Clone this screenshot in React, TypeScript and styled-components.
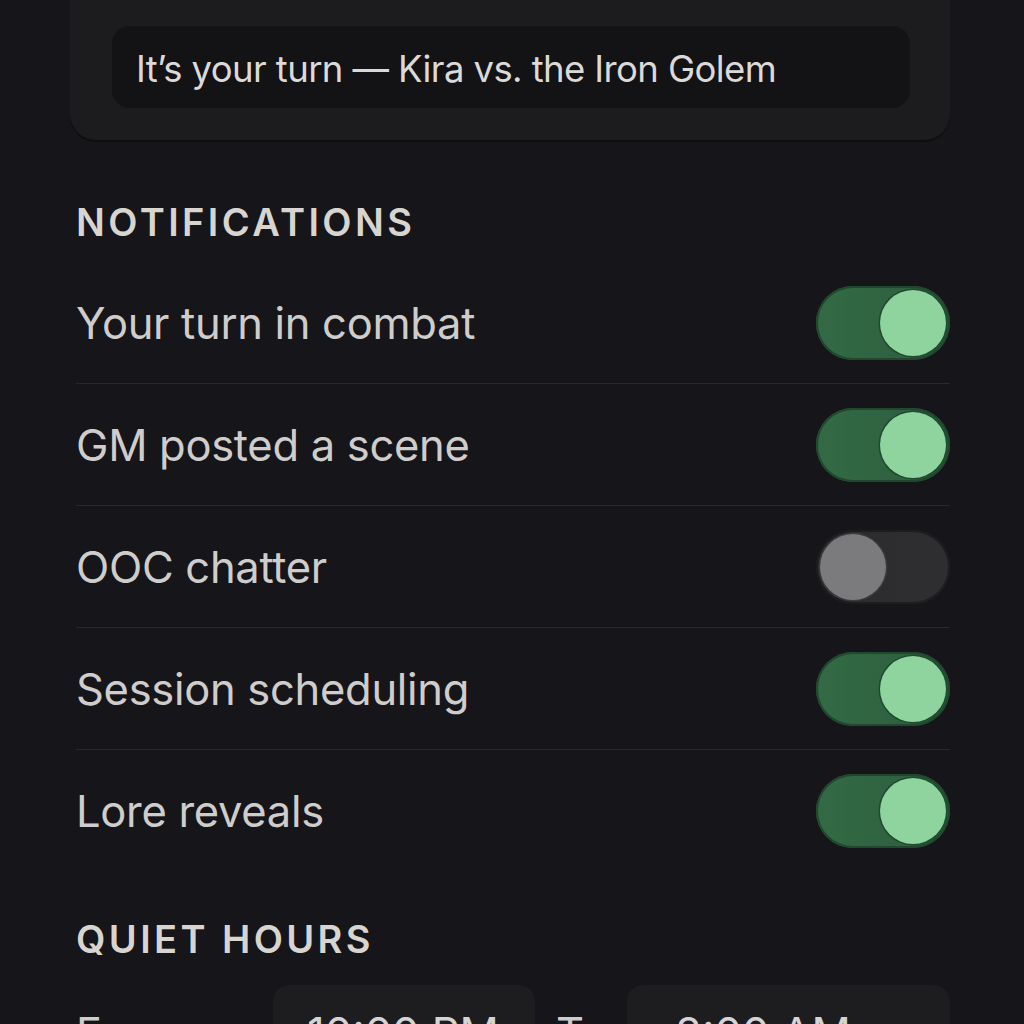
import React, { useState } from "react";
import styled, { createGlobalStyle } from "styled-components";

const GlobalStyle = createGlobalStyle`
  html, body {
    margin: 0;
    padding: 0;
    background: #161519;
    overflow: hidden;
  }
  body {
    font-family: Inter, "Noto Sans", sans-serif;
    color: #d2d0ce;
  }
`;

type Pref = { key: string; label: string; on: boolean };

const initialPrefs: Pref[] = [
  { key: "turn", label: "Your turn in combat", on: true },
  { key: "scene", label: "GM posted a scene", on: true },
  { key: "ooc", label: "OOC chatter", on: false },
  { key: "schedule", label: "Session scheduling", on: true },
  { key: "lore", label: "Lore reveals", on: true },
];

const App = () => {
  const [prefs, setPrefs] = useState(initialPrefs);

  const toggle = (key: string) =>
    setPrefs((list) =>
      list.map((p) => (p.key === key ? { ...p, on: !p.on } : p))
    );

  return (
    <>
      <GlobalStyle />
      <Page>
        <PreviewCard>
          <PreviewInner>It’s your turn — Kira vs. the Iron Golem</PreviewInner>
        </PreviewCard>

        <SectionTitle>Notifications</SectionTitle>
        <List>
          {prefs.map((p) => (
            <Row key={p.key}>
              <RowLabel>{p.label}</RowLabel>
              <Switch
                $on={p.on}
                role="switch"
                aria-checked={p.on}
                onClick={() => toggle(p.key)}
              >
                <Knob $on={p.on} />
              </Switch>
            </Row>
          ))}
        </List>

        <SectionTitle $quiet>Quiet hours</SectionTitle>
        <TimeRow>
          <TimeLabel>From</TimeLabel>
          <TimeBox $indent={34}>10:00 PM</TimeBox>
          <TimeLabel>To</TimeLabel>
          <TimeBox $indent={48}>8:00 AM</TimeBox>
        </TimeRow>
      </Page>
    </>
  );
};

export default App;

const Page = styled.div`
  padding: 0 74px 0 76px;
  display: flex;
  flex-direction: column;
`;

const PreviewCard = styled.div`
  margin: -24px 0 0 -6px;
  padding: 50px 40px 32px 42px;
  background: #1c1b1e;
  border-radius: 26px;
  box-shadow: 0 2px 0 rgba(0, 0, 0, 0.35);
`;

const PreviewInner = styled.div`
  height: 82px;
  display: flex;
  align-items: center;
  padding: 4px 24px 0;
  box-sizing: border-box;
  background: #131215;
  border-radius: 18px;
  font-size: 36.5px;
  color: #dcdad8;
  letter-spacing: -0.6px;
`;

const SectionTitle = styled.h2<{ $quiet?: boolean }>`
  margin: ${(p) => (p.$quiet ? "46px 0 0" : "60px 0 0")};
  height: 44px;
  line-height: 44px;
  font-size: 38px;
  font-weight: 600;
  letter-spacing: 3.4px;
  text-transform: uppercase;
  color: #d8d5d1;
`;

const List = styled.div`
  margin-top: 18px;
  display: flex;
  flex-direction: column;
`;

const Row = styled.div`
  height: 121px;
  display: flex;
  align-items: center;
  justify-content: space-between;
  border-bottom: 1px solid #29282c;

  &:last-child {
    border-bottom: none;
  }
`;

const RowLabel = styled.span`
  font-size: 43.5px;
  color: #cfcdcb;
  letter-spacing: -0.3px;
`;

const Switch = styled.button<{ $on: boolean }>`
  width: 134px;
  height: 74px;
  border: none;
  padding: 0 4px;
  border-radius: 37px;
  display: flex;
  align-items: center;
  justify-content: ${(p) => (p.$on ? "flex-end" : "flex-start")};
  background: ${(p) =>
    p.$on
      ? "linear-gradient(90deg, #336a45, #2d5c3d)"
      : "linear-gradient(90deg, #2a292c, #2f2e31)"};
  box-shadow: inset 0 0 0 2px
    ${(p) => (p.$on ? "rgba(30, 70, 45, 0.9)" : "rgba(20, 20, 22, 0.6)")};
  cursor: pointer;
`;

const Knob = styled.span<{ $on: boolean }>`
  width: 66px;
  height: 66px;
  border-radius: 50%;
  background: ${(p) => (p.$on ? "#8fd49f" : "#7b7a7c")};
  box-shadow: 0 0 0 1.5px ${(p) => (p.$on ? "#1f4a2d" : "#3a393c")};
`;

const TimeRow = styled.div`
  margin-top: 24px;
  display: grid;
  grid-template-columns: 197px 262px 92px 1fr;
  align-items: start;
`;

const TimeLabel = styled.span`
  padding-top: 22px;
  font-size: 43.5px;
  color: #cfcdcb;
  &:nth-of-type(2) {
    padding-left: 21px;
  }
`;

const TimeBox = styled.div<{ $indent: number }>`
  height: 84px;
  padding: 22px 0 0 ${(p) => p.$indent}px;
  box-sizing: border-box;
  background: #1d1c1f;
  border-radius: 16px;
  font-size: 43.5px;
  color: #d6d4d2;
`;
